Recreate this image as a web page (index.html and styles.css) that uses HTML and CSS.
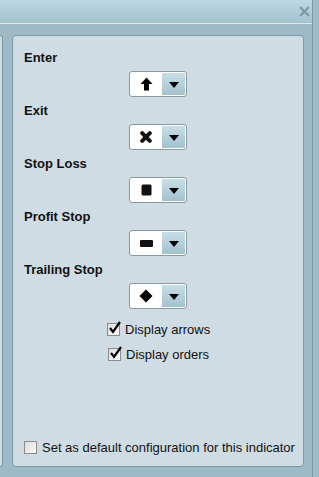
FILE: index.html
```html
<!DOCTYPE html>
<html lang="en">
<head>
    <meta charset="UTF-8">
    <title>Indicator settings</title>
    <link rel="stylesheet" href="styles.css">
</head>
<body>
    <div class="dialog">
        <div class="titlebar">
            <svg class="close" width="11" height="11" viewBox="0 0 11 11">
                <path d="M1 1 L10 10 M10 1 L1 10" stroke="#7e97a2" stroke-width="2.2"/>
            </svg>
        </div>
        <div class="dialog-body">
            <div class="stub"></div>
            <div class="panel">
                <div class="row">
                    <div class="label">Enter</div>
                    <div class="picker">
                        <span class="glyph">
                            <svg width="13" height="14" viewBox="0 0 13 14"><path d="M6.5 0.5 L12.5 7 L9 7 L9 13.5 L4 13.5 L4 7 L0.5 7 Z" fill="#000"/></svg>
                        </span>
                        <span class="drop"><i class="tri"></i></span>
                    </div>
                </div>
                <div class="row">
                    <div class="label">Exit</div>
                    <div class="picker">
                        <span class="glyph">
                            <svg width="12" height="12" viewBox="0 0 12 12"><path d="M2.2 2.2 L9.8 9.8 M9.8 2.2 L2.2 9.8" stroke="#111" stroke-width="4" stroke-linecap="round"/></svg>
                        </span>
                        <span class="drop"><i class="tri"></i></span>
                    </div>
                </div>
                <div class="row">
                    <div class="label">Stop Loss</div>
                    <div class="picker">
                        <span class="glyph">
                            <svg width="11" height="12" viewBox="0 0 11 12"><rect x="0.5" y="0.5" width="10" height="11" rx="1.5" fill="#111"/></svg>
                        </span>
                        <span class="drop"><i class="tri"></i></span>
                    </div>
                </div>
                <div class="row">
                    <div class="label">Profit Stop</div>
                    <div class="picker">
                        <span class="glyph">
                            <svg width="13" height="7" viewBox="0 0 13 7"><rect x="0" y="0" width="13" height="7" rx="1" fill="#111"/></svg>
                        </span>
                        <span class="drop"><i class="tri"></i></span>
                    </div>
                </div>
                <div class="row">
                    <div class="label">Trailing Stop</div>
                    <div class="picker">
                        <span class="glyph">
                            <svg width="14" height="14" viewBox="0 0 14 14"><path d="M7 0.5 L13.5 7 L7 13.5 L0.5 7 Z" fill="#000"/></svg>
                        </span>
                        <span class="drop"><i class="tri"></i></span>
                    </div>
                </div>
                <div class="options">
                    <label class="check">
                        <span class="box">
                            <svg class="tick" width="14" height="14" viewBox="0 0 14 14"><path d="M2 7 L5 11 L12 1" fill="none" stroke="#000" stroke-width="2.2"/></svg>
                        </span>
                        Display arrows
                    </label>
                    <label class="check second">
                        <span class="box">
                            <svg class="tick" width="14" height="14" viewBox="0 0 14 14"><path d="M2 7 L5 11 L12 1" fill="none" stroke="#000" stroke-width="2.2"/></svg>
                        </span>
                        Display orders
                    </label>
                </div>
                <label class="check footer">
                    <span class="box"></span>
                    Set as default configuration for this indicator
                </label>
            </div>
        </div>
    </div>
</body>
</html>
```

FILE: styles.css
```css
body {
    margin: 0;
    background: #9dbac6;
    font-family: "Liberation Sans", Arial, sans-serif;
    font-size: 13px;
    color: #111;
}
.dialog {
    width: 312px;
    height: 477px;
    background: #9dbac6;
    border-right: 1px solid #7f99a4;
    display: flex;
    flex-direction: column;
}
.titlebar {
    height: 23px;
    background: linear-gradient(#bcd8e4, #a3c2ce);
    border-bottom: 1px solid #d9e7ec;
    display: flex;
    justify-content: flex-end;
    align-items: center;
}
.close {
    margin-right: 2px;
}
.dialog-body {
    display: flex;
    gap: 9px;
    padding: 11px 8px 0 0;
}
.stub {
    width: 2px;
    height: 430px;
    background: #cddbe2;
    border: 1px solid #7d98a3;
    border-left: none;
    border-radius: 0 4px 4px 0;
}
.panel {
    flex: 1;
    box-sizing: border-box;
    height: 432px;
    background: #cfdce3;
    border: 1px solid #7d98a3;
    border-radius: 4px;
    padding: 14px 0 11px 11px;
    display: flex;
    flex-direction: column;
}
.row {
    height: 53px;
}
.label {
    font-weight: bold;
    line-height: 15px;
    height: 14px;
}
.picker {
    margin: 7px 0 0 105px;
    width: 56px;
    height: 24px;
    background: #fff;
    border: 1px solid #8899a2;
    border-radius: 3px;
    display: flex;
    align-items: center;
}
.glyph {
    width: 32px;
    display: flex;
    justify-content: center;
    align-items: center;
}
.drop {
    width: 23px;
    height: 22px;
    background: linear-gradient(#c8dee7, #a2c2ce);
    display: flex;
    justify-content: center;
    align-items: center;
}
.tri {
    width: 0;
    height: 0;
    border-left: 5px solid transparent;
    border-right: 5px solid transparent;
    border-top: 6px solid #000;
    margin-top: 1px;
}
.options {
    margin: 7px 0 0 83px;
    display: flex;
    flex-direction: column;
    gap: 10px;
}
.check {
    display: flex;
    align-items: center;
    gap: 5px;
    line-height: 15px;
    white-space: nowrap;
}
.check.second {
    margin-left: 1px;
}
.box {
    width: 11px;
    height: 11px;
    border: 1px solid #8c8c8c;
    background: linear-gradient(135deg, #dcdcdc, #fbfbfb);
    position: relative;
    flex: none;
}
.tick {
    position: absolute;
    left: 0;
    top: -3px;
}
.footer {
    margin-top: auto;
}
```
